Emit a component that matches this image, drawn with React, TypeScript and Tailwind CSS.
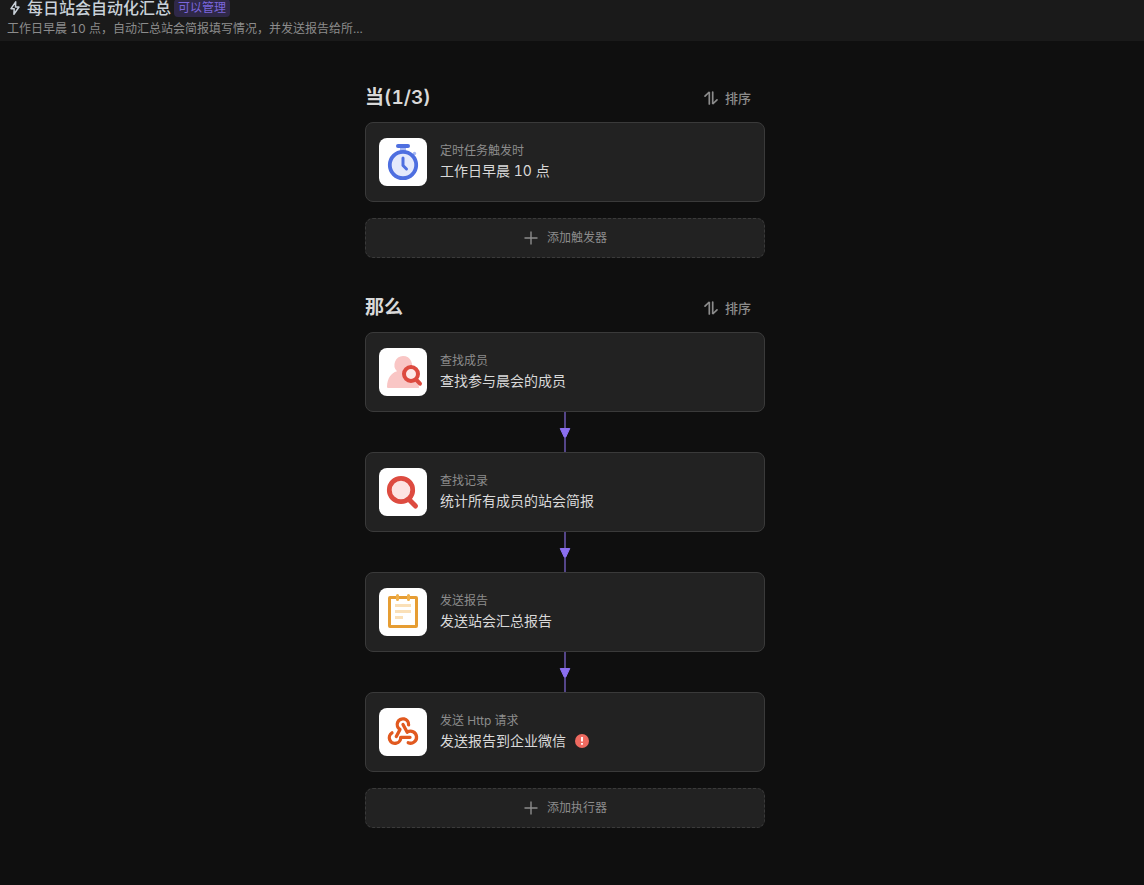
import type { ReactNode } from 'react'

interface FlowItem {
  id: string
  label: string
  title: string
  icon: ReactNode
  hasError?: boolean
}

function BoltIcon() {
  return (
    <svg width="16" height="16" viewBox="0 0 16 16" fill="none" aria-hidden="true">
      <path
        d="M8.7 1.8 4 8.7h3.2l-.3 5.5L12 7H8.5l.2-5.2Z"
        stroke="currentColor"
        strokeWidth="1.5"
        strokeLinejoin="round"
      />
    </svg>
  )
}

function SortIcon() {
  return (
    <svg width="16" height="16" viewBox="0 0 16 16" fill="none" aria-hidden="true">
      <path
        d="M2 6.2 6.3 2v12M9.7 2v12L14 9.8"
        stroke="currentColor"
        strokeWidth="1.7"
        strokeLinecap="round"
        strokeLinejoin="bevel"
      />
    </svg>
  )
}

function PlusIcon() {
  return (
    <svg width="16" height="16" viewBox="0 0 16 16" fill="none" aria-hidden="true">
      <path d="M8 1.5v13M1.5 8h13" stroke="currentColor" strokeWidth="1.4" />
    </svg>
  )
}

function TimerIcon() {
  return (
    <svg width="48" height="48" viewBox="0 0 48 48" fill="none" aria-hidden="true">
      <path d="M21 9h6v4h-6z" fill="#a9b9f2" />
      <circle cx="35.5" cy="15.5" r="1.7" fill="#a9b9f2" />
      <rect x="17" y="6" width="14" height="4" rx="2" fill="#4e6fe0" />
      <circle cx="24" cy="27" r="13.2" fill="#e4e9fb" stroke="#4e6fe0" strokeWidth="3.8" />
      <path
        d="M24 20v7.5l3.5 3.5"
        stroke="#4e6fe0"
        strokeWidth="3"
        strokeLinecap="round"
        strokeLinejoin="round"
      />
    </svg>
  )
}

function FindMemberIcon() {
  return (
    <svg width="48" height="48" viewBox="0 0 48 48" fill="none" aria-hidden="true">
      <path
        d="M24 8a9 9 0 0 1 6.8 14.9C36 25.5 39.5 30 40 40H9.5c-1 0-1.5-.5-1.500-1.500C8.300 30.500 12 25 18 23.300A9 9 0 0 1 24 8Z"
        fill="#f9c6c5"
      />
      <circle cx="32" cy="26" r="7" fill="#fde9e8" stroke="#dd4b40" strokeWidth="4" />
      <path d="m37 31.5 4 4.2" stroke="#dd4b40" strokeWidth="4" strokeLinecap="round" />
    </svg>
  )
}

function FindRecordIcon() {
  return (
    <svg width="48" height="48" viewBox="0 0 48 48" fill="none" aria-hidden="true">
      <path d="m30.5 32 6 6" stroke="#dd4b40" strokeWidth="5" strokeLinecap="round" />
      <circle cx="22" cy="22" r="11.7" fill="#fde4e2" stroke="#dd4b40" strokeWidth="4.8" />
    </svg>
  )
}

function ReportIcon() {
  return (
    <svg width="48" height="48" viewBox="0 0 48 48" fill="none" aria-hidden="true">
      <rect x="10.5" y="9.5" width="27" height="29" rx="0.5" stroke="#e69d33" strokeWidth="3" />
      <path d="M18.5 7.5v4M29.5 7.5v4" stroke="#f0b04a" strokeWidth="3" strokeLinecap="round" />
      <path d="M16 17.5h16M16 23.5h16M16 29.5h8" stroke="#fae0b8" strokeWidth="3" />
    </svg>
  )
}

function WebhookIcon() {
  return (
    <svg
      width="48"
      height="48"
      viewBox="0 0 48 48"
      fill="none"
      stroke="#e1591f"
      strokeWidth="3.3"
      strokeLinecap="round"
      strokeLinejoin="round"
      aria-hidden="true"
    >
      <path d="M29.6 16.8a5.700 5.700 0 1 0-8.600 4.600L17.300 28.500" />
      <path d="m24 16.500 4.200 7.700a6 6 0 1 1 1 10.500" />
      <path d="M31 29.300h-9.300a5.700 5.700 0 1 1-8.700-4.500" />
    </svg>
  )
}

function ErrorBadge() {
  return (
    <svg width="14" height="14" viewBox="0 0 14 14" role="img" aria-label="错误">
      <circle cx="7" cy="7" r="7" fill="#ee6a60" />
      <path d="M7 3v4.6M7 9v1.800" stroke="#fff" strokeWidth="1.8" />
    </svg>
  )
}

const triggers: FlowItem[] = [
  { id: 'timer', label: '定时任务触发时', title: '工作日早晨 10 点', icon: <TimerIcon /> },
]

const actions: FlowItem[] = [
  { id: 'member', label: '查找成员', title: '查找参与晨会的成员', icon: <FindMemberIcon /> },
  { id: 'record', label: '查找记录', title: '统计所有成员的站会简报', icon: <FindRecordIcon /> },
  { id: 'report', label: '发送报告', title: '发送站会汇总报告', icon: <ReportIcon /> },
  {
    id: 'webhook',
    label: '发送 Http 请求',
    title: '发送报告到企业微信',
    icon: <WebhookIcon />,
    hasError: true,
  },
]

function FlowCard({ item }: { item: FlowItem }) {
  return (
    <button
      type="button"
      className="flex h-20 w-full items-center gap-[13px] rounded-lg border border-[#3a3a3a] bg-[#222222] px-[13px] text-left"
    >
      <span className="size-12 shrink-0 overflow-hidden rounded-lg bg-white">{item.icon}</span>
      <span className="flex min-w-0 flex-col pb-0.5">
        <span className="text-xs leading-5 text-[#8c8c8c]">{item.label}</span>
        <span className="flex items-center gap-[9px] text-sm leading-5 text-[#d9d9d9]">
          {item.title}
          {item.hasError && <ErrorBadge />}
        </span>
      </span>
    </button>
  )
}

function Connector() {
  return (
    <svg className="mx-auto block" width="12" height="40" viewBox="0 0 12 40" aria-hidden="true">
      <path d="M6 0v40" stroke="#544589" strokeWidth="2" />
      <path
        d="M1.2 16.5h9.6L6.8 25H5.2Z"
        fill="#8b6ff0"
        stroke="#8b6ff0"
        strokeWidth="1"
        strokeLinejoin="round"
      />
    </svg>
  )
}

interface FlowSectionProps {
  heading: string
  items: FlowItem[]
  addLabel: string
}

function FlowSection({ heading, items, addLabel }: FlowSectionProps) {
  return (
    <section>
      <div className="flex h-10 items-center justify-between">
        <h2 className="text-[19px] leading-7 font-semibold text-[#d9d9d9]">{heading}</h2>
        <button
          type="button"
          className="flex items-center gap-1.5 px-3.5 text-[13px] leading-5 font-medium text-[#8c8c8c]"
        >
          <SortIcon />
          排序
        </button>
      </div>
      <ul className="mt-1">
        {items.map((item, i) => (
          <li key={item.id}>
            {i > 0 && <Connector />}
            <FlowCard item={item} />
          </li>
        ))}
      </ul>
      <button
        type="button"
        className="mt-4 flex h-10 w-full items-center justify-center gap-2 rounded-lg border border-dashed border-[#3a3a3a] bg-[#222222] text-xs text-[#8c8c8c]"
      >
        <PlusIcon />
        {addLabel}
      </button>
    </section>
  )
}

export default function App() {
  return (
    <div className="min-h-screen bg-[#0f0f0f] font-['Inter','Noto_Sans_CJK_SC',sans-serif] tabular-nums">
      <header className="bg-[#1a1a1a] px-[7px] pb-0.5">
        <div className="flex h-4 items-center gap-[3px] text-[#c9d1d9]">
          <BoltIcon />
          <h1 className="pl-px text-base leading-4 font-medium">每日站会自动化汇总</h1>
          <span className="rounded-sm bg-[#2f2848] px-1 text-xs leading-[18px] text-[#7b67dd]">
            可以管理
          </span>
        </div>
        <p className="mt-[3px] max-w-[360px] truncate text-xs leading-5 text-[#8c8c8c]">
          工作日早晨 10 点，自动汇总站会简报填写情况，并发送报告给所...
        </p>
      </header>

      <main className="pt-[37px] pb-9 pr-3.5">
        <div className="mx-auto flex max-w-[400px] flex-col gap-[30px]">
          <FlowSection heading="当(1/3)" items={triggers} addLabel="添加触发器" />
          <FlowSection heading="那么" items={actions} addLabel="添加执行器" />
        </div>
      </main>
    </div>
  )
}
